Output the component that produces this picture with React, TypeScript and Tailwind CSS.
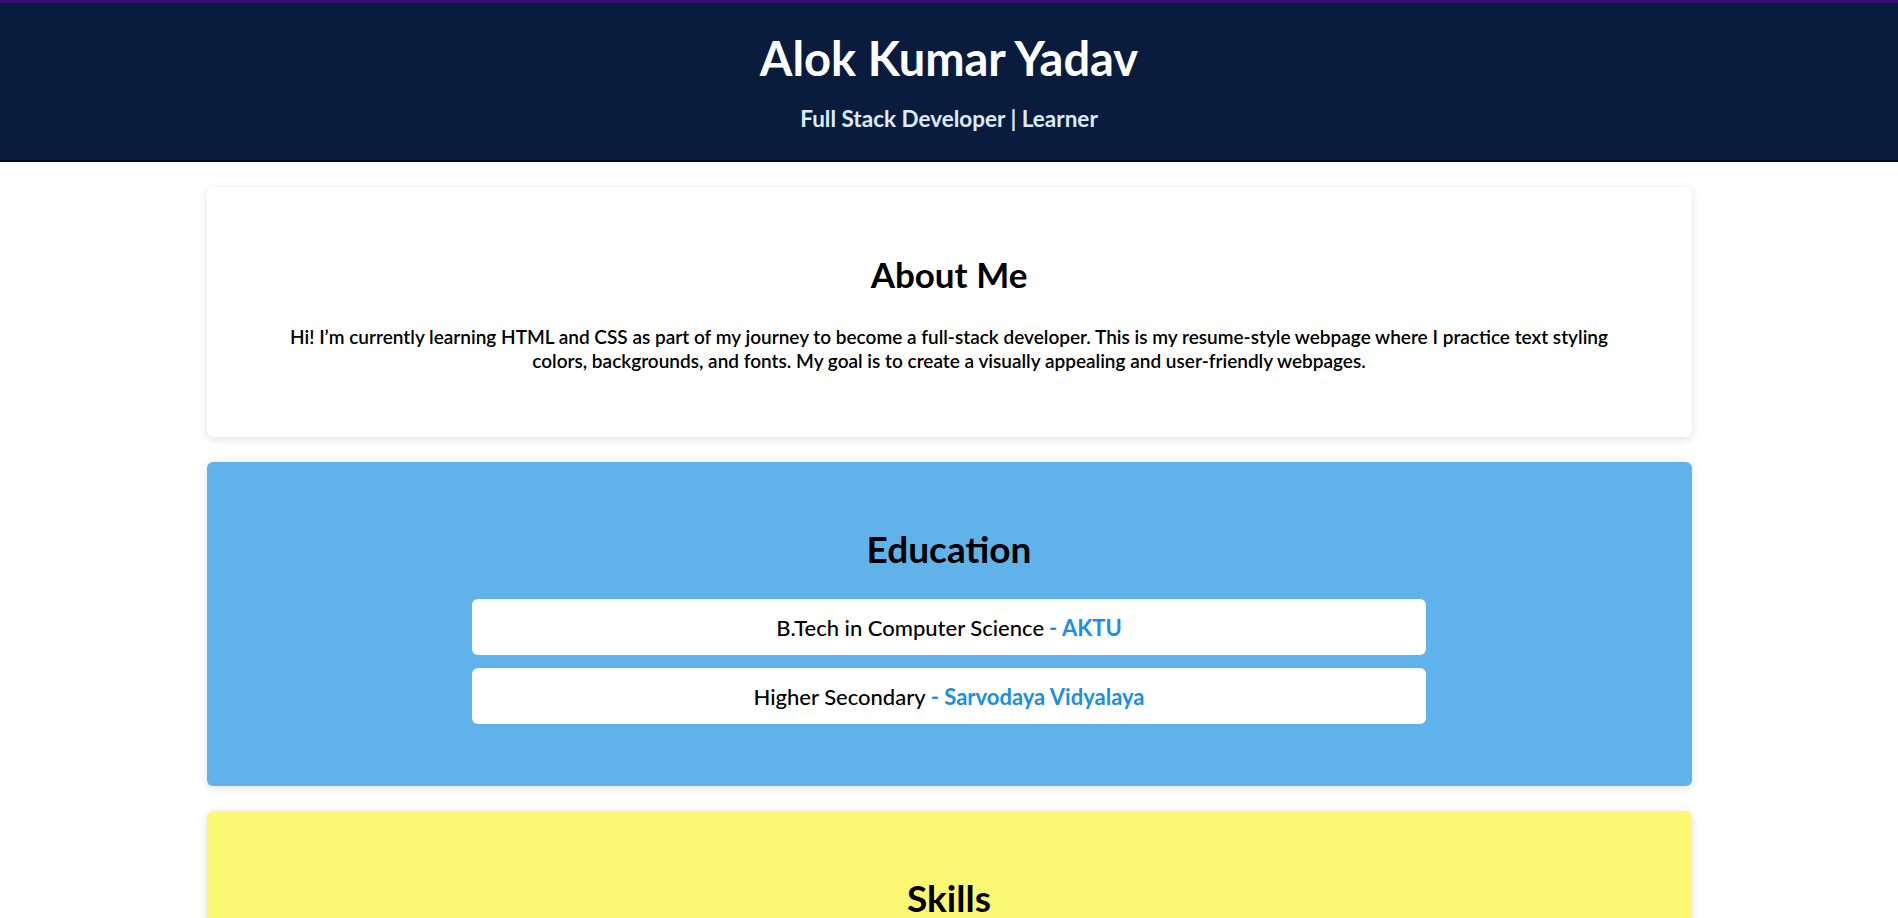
const education = [
  { course: 'B.Tech in Computer Science', place: 'AKTU' },
  { course: 'Higher Secondary', place: 'Sarvodaya Vidyalaya' },
];

const skills = ['HTML', 'CSS', 'JavaScript', 'React'];

export default function App() {
  return (
    <div className="min-h-screen bg-white font-['Lato','Noto_Sans',sans-serif] text-black">
      {/* Header */}
      <header className="border-t-[3px] border-b-2 border-t-[#33106e] border-b-[#040b1a] bg-[#0a1c3e] pt-[28px] pb-[28px] text-center">
        <h1 className="text-[47px] leading-[55px] font-bold text-white">Alok Kumar Yadav</h1>
        <p className="mt-[20px] text-[22.5px] leading-[26px] font-bold text-[#dcebfa]">
          Full Stack Developer | Learner
        </p>
      </header>

      <main className="mx-auto flex w-[1485px] flex-col gap-[25px] pt-[25px] pb-10">
        {/* About */}
        <section className="rounded-md bg-white px-10 pt-[65px] pb-[64px] text-center shadow-[0_2px_10px_rgba(0,0,0,0.12)]">
          <h2 className="text-[35px] leading-[44px] font-bold">About Me</h2>
          <p className="mx-auto mt-[29px] max-w-[1340px] text-[19px] leading-[24px] font-semibold">
            Hi! I’m currently learning HTML and CSS as part of my journey to become a full-stack developer. This is my
            resume-style webpage where I practice text styling colors, backgrounds, and fonts. My goal is to create a
            visually appealing and user-friendly webpages.
          </p>
        </section>

        {/* Education */}
        <section className="rounded-md bg-[#60b3ea] px-10 pt-[65px] pb-[62px] text-center shadow-[0_2px_10px_rgba(0,0,0,0.12)]">
          <h2 className="text-[37px] leading-[44px] font-bold">Education</h2>
          <ul className="mx-auto mt-[28px] flex w-[954px] flex-col gap-[13px]">
            {education.map((e) => (
              <li
                key={e.course}
                className="flex h-[56px] items-center justify-center rounded-md bg-white text-[22px] font-medium"
              >
                {e.course}
                <span className="ml-[5px] font-bold text-[#1a8fe3]">- {e.place}</span>
              </li>
            ))}
          </ul>
        </section>

        {/* Skills */}
        <section className="rounded-md bg-[#fcf873] px-10 pt-[65px] pb-[62px] text-center shadow-[0_2px_10px_rgba(0,0,0,0.12)]">
          <h2 className="text-[37px] leading-[44px] font-bold">Skills</h2>
          <ul className="mx-auto mt-[28px] flex w-[954px] flex-col gap-[13px]">
            {skills.map((s) => (
              <li key={s} className="flex h-[56px] items-center justify-center rounded-md bg-white text-[22px] font-medium">
                {s}
              </li>
            ))}
          </ul>
        </section>
      </main>
    </div>
  );
}
